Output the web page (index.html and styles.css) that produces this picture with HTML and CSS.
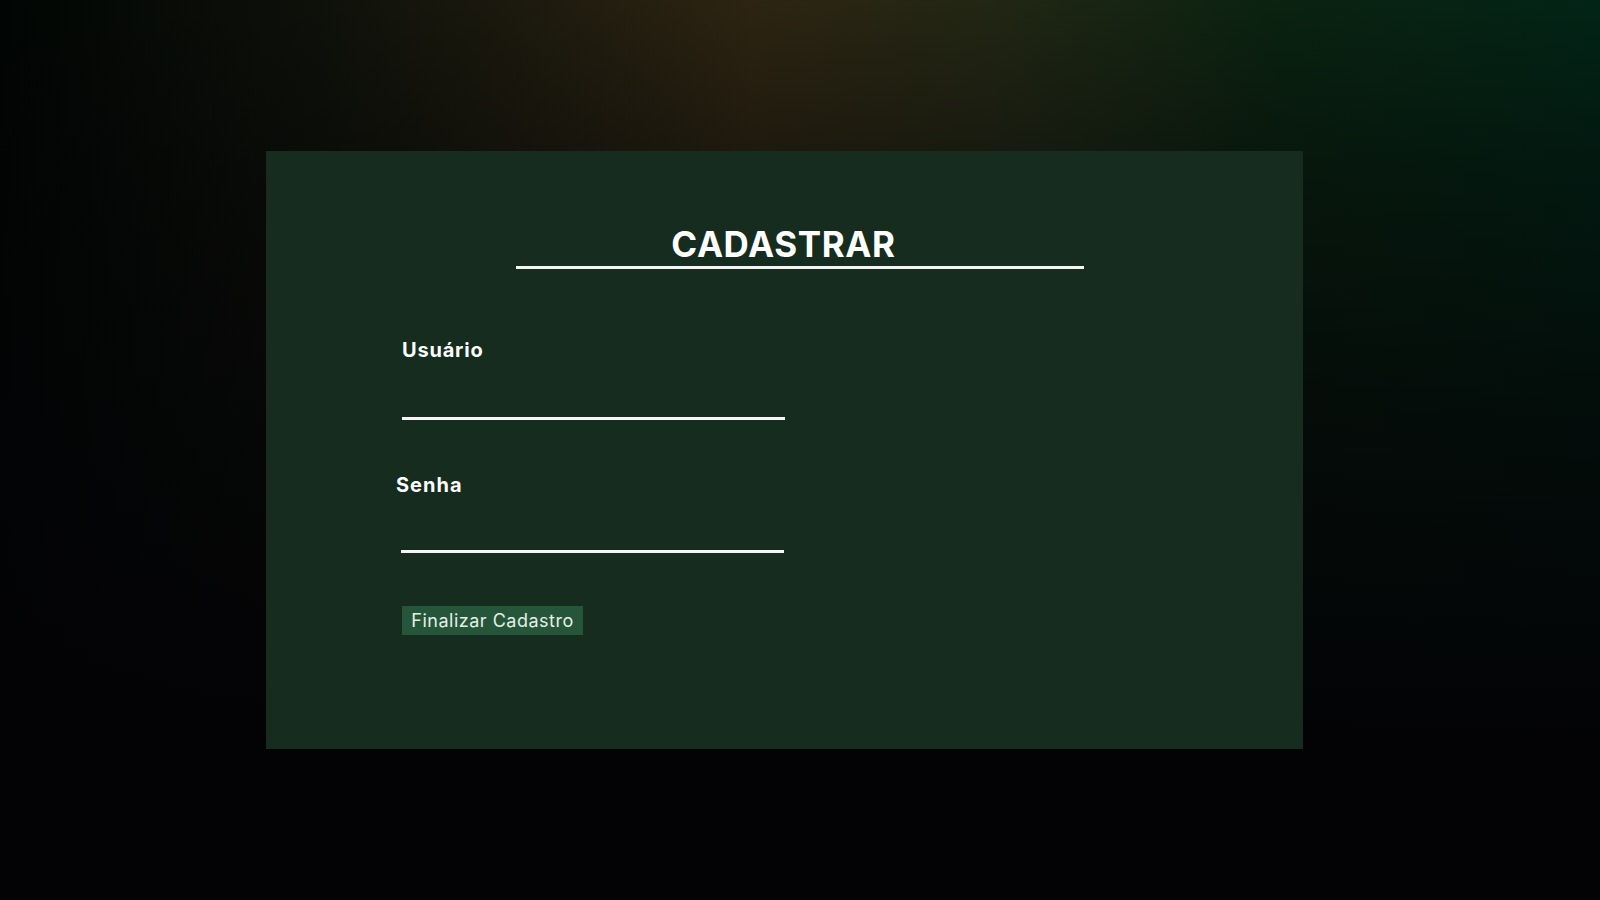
FILE: index.html
```html
<!DOCTYPE html>
<html lang="pt-BR">
<head>
<meta charset="utf-8">
<title>Cadastrar</title>
<link rel="stylesheet" href="styles.css">
</head>
<body>
<main class="page">
  <section class="card">
    <h1 class="title">CADASTRAR</h1>
    <form class="form">
      <div class="field">
        <label class="label" for="user">Usuário</label>
        <input class="input" id="user" type="text">
      </div>
      <div class="field field-senha">
        <label class="label label-senha" for="pass">Senha</label>
        <input class="input" id="pass" type="password">
      </div>
      <button class="btn" type="button">Finalizar Cadastro</button>
    </form>
  </section>
</main>
</body>
</html>
```

FILE: styles.css
```css
* { box-sizing: border-box; }
html, body { margin: 0; padding: 0; height: 100%; }
body {
  font-family: Inter, "Liberation Sans", sans-serif;
  color: #fff;
  background-color: #030305;
  background-image:
    linear-gradient(180deg, rgba(3, 3, 5, 0) 0%, rgba(3, 3, 5, 0.35) 18%, rgba(3, 3, 5, 0.7) 45%, rgba(3, 3, 5, 1) 82%),
    linear-gradient(90deg, #010503 0%, #0e110a 20%, #2d2412 47%, #222614 62%, #0a2210 80%, #022416 100%);
}
.page {
  height: 900px;
  display: flex;
  align-items: center;
  padding-left: 266px;
}
.card {
  width: 1037px;
  height: 598px;
  background: #152c1e;
  padding-top: 73px;
}
.title {
  margin: 0 0 0 250px;
  width: 568px;
  font-size: 35px;
  line-height: 40px;
  font-weight: 700;
  letter-spacing: 0.6px;
  text-align: center;
  padding-right: 33px;
  padding-bottom: 2px;
  border-bottom: 3px solid #f4f4f4;
}
.form {
  margin-left: 136px;
  padding-top: 69px;
  display: flex;
  flex-direction: column;
  align-items: flex-start;
}
.field {
  display: flex;
  flex-direction: column;
  align-items: flex-start;
}
.field-senha { margin-top: 53px; }
.label {
  font-size: 20px;
  line-height: 24px;
  font-weight: 700;
  letter-spacing: 0.8px;
  color: #fbfbfb;
}
.label-senha { margin-left: -6px; letter-spacing: 1px; }
.input {
  margin-top: 18px;
  width: 383px;
  height: 40px;
  background: transparent;
  border: none;
  border-bottom: 3px solid #f6f6f6;
  outline: none;
  color: #fff;
  font: inherit;
  padding: 0;
}
.field-senha .input { margin-top: 16px; margin-left: -1px; }
.btn {
  margin-top: 53px;
  width: 181px;
  height: 29px;
  background: #25563a;
  border: none;
  color: #e6efe6;
  font-family: Inter, "Liberation Sans", sans-serif;
  font-size: 18px;
  letter-spacing: 0.5px;
  font-weight: 400;
  padding: 0;
  text-align: center;
}
```
